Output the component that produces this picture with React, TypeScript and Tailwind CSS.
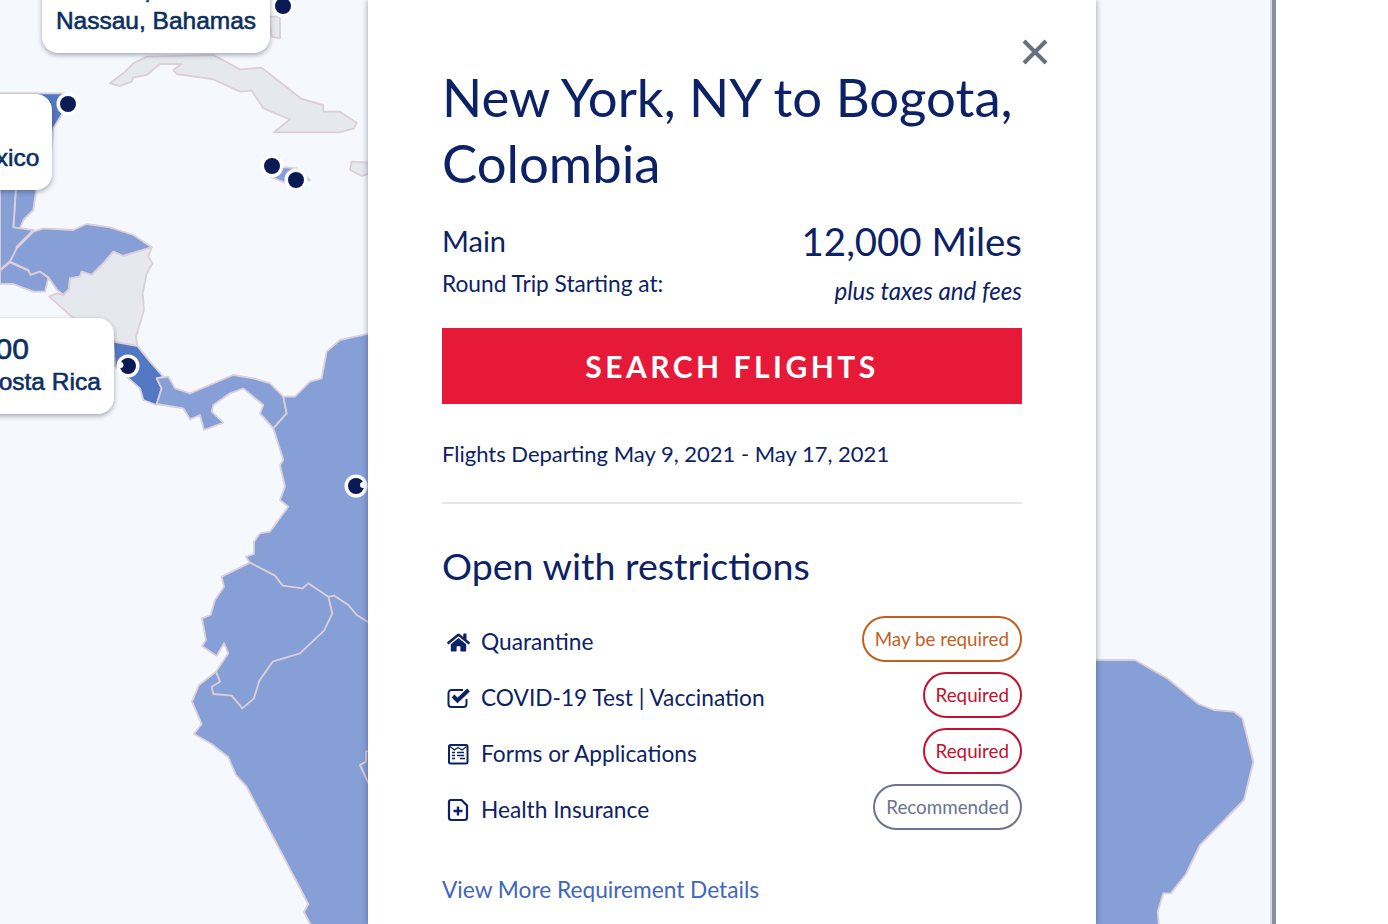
import { FaHome } from "react-icons/fa";

const NAVY = "#0d2266";

// all map shapes are traced in 3x reference coordinates
const blue = "#869fd7";
const dark = "#5278c4";
const grey = "#e5e8ed";
const line = "#dccfd8";

const leftShapes: { fill: string; points: string }[] = [
  { fill: grey, points: "330,250 375,215 400,190 440,170 640,165 720,208 785,203 905,297 970,315 970,335 1020,335 1070,368 1062,385 1020,397 822,397 870,358 790,325 755,272 720,275 640,238 530,222 520,210 545,192 480,192 440,225 400,232 395,245 360,258" },
  { fill: grey, points: "805,50 840,50 840,115 815,110" },
  { fill: grey, points: "1055,485 1110,488 1110,520 1085,528 1050,510" },
  { fill: blue, points: "830,500 890,505 930,540 890,550 855,548 810,530" },
  { fill: dark, points: "60,280 195,280 205,312 160,385 155,440 0,440 0,280" },
  { fill: blue, points: "48,560 110,560 100,630 70,660 60,685 40,685" },
  { fill: blue, points: "0,560 48,560 40,682 100,690 50,740 45,770 0,810" },
  { fill: blue, points: "100,695 130,685 220,690 260,672 330,682 400,705 455,742 370,768 340,755 315,785 275,825 245,815 240,830 210,835 207,868 190,885 170,868 145,832 120,815 90,825 85,810 30,785 50,745" },
  { fill: blue, points: "0,812 30,787 85,812 92,825 120,815 145,833 135,875 100,875 40,852 0,852" },
  { fill: grey, points: "455,742 445,770 458,790 440,820 428,880 432,930 408,1010 412,1040 345,1025 300,990 215,950 148,890 170,880 190,885 207,868 210,835 240,830 245,815 275,825 315,785 340,755 370,768" },
  { fill: dark, points: "340,1025 412,1038 450,1085 490,1130 470,1135 485,1165 470,1215 430,1200 420,1165 345,1100" },
  { fill: blue, points: "470,1135 505,1130 525,1165 570,1180 700,1125 760,1135 810,1150 850,1190 860,1240 820,1285 780,1240 790,1215 730,1165 690,1180 640,1215 635,1235 670,1268 612,1290 600,1245 570,1258 550,1225 470,1212 485,1165" },
  { fill: blue, points: "1110,1000 1065,1010 1020,1020 980,1055 965,1135 930,1145 885,1190 850,1190 860,1240 820,1285 850,1380 840,1395 855,1460 840,1500 865,1520 810,1595 780,1600 762,1625 762,1662 738,1670 750,1688 665,1730 672,1760 645,1800 632,1845 606,1855 618,1920 606,1938 650,1968 672,1930 685,1960 648,2015 597,2055 576,2105 605,2172 582,2202 635,2232 685,2272 708,2325 740,2360 925,2712 912,2736 935,2780 1110,2780" },
];

const borders = [
  "750,1688 825,1727 848,1757 908,1765 925,1750 985,1790",
  "985,1790 997,1840 972,1892 900,1960 818,1985 778,2042 762,2095 727,2125 695,2087 640,2082 635,2060 660,2045 648,2015",
  "985,1790 1003,1787 1045,1815 1070,1845 1110,1870",
  "1110,2252 1098,2255 1098,2285 1080,2295 1110,2360",
];

const pins = [
  [68, 104],
  [272, 166],
  [296, 180],
  [283, 6],
  [128, 366],
  [356, 486],
];

const MapCanvas = () => (
  <svg className="absolute inset-0" width="1272" height="924" viewBox="0 0 3816 2772" aria-hidden>
    <g strokeLinejoin="round" stroke={line} strokeWidth="5.5">
      {leftShapes.map((s, i) => (
        <polygon key={i} points={s.points} fill={s.fill} />
      ))}
      {borders.map((b, i) => (
        <polyline key={i} points={b} fill="none" />
      ))}
      <g transform="translate(3240 1860)">
        <polygon fill={blue} points="48,120 165,120 262,175 355,252 402,270 462,275 487,295 520,425 492,540 360,675 318,762 272,820 250,820 233,875 237,920 -100,920 -100,120" />
      </g>
    </g>
    {pins.map(([x, y]) => (
      <g key={`${x}-${y}`} transform="scale(3)">
        <circle cx={x} cy={y} r="11.5" fill="#fff" />
        <circle cx={x} cy={y} r="8" fill="#0a1a55" />
      </g>
    ))}
    <g transform="scale(3)" fill="#fff">
      <circle cx="120.5" cy="365" r="3" />
      <circle cx="363" cy="485" r="3" />
    </g>
  </svg>
);

const Fare = ({ className, miles, city }: { className: string; miles: string; city: string }) => (
  <div
    className={`absolute rounded-[16px] bg-white text-center text-[#0b2f63] shadow-[0_2px_5px_rgba(40,40,60,.4)] font-['Liberation_Sans',sans-serif] ${className}`}
  >
    <div className="mt-[13px] text-[30px] leading-[36px] [-webkit-text-stroke:0.6px_#0b2f63]">{miles}</div>
    <div className="text-[24.5px] leading-[30px] whitespace-nowrap [-webkit-text-stroke:0.6px_#0b2f63]">{city}</div>
  </div>
);

const HouseIcon = () => <FaHome className="h-[21px] w-[23px] text-[#0d2266]" />;

const CheckIcon = () => (
  <svg width="24" height="22" viewBox="0 0 24 22" fill="none">
    <path d="M19.5 12v5a3 3 0 0 1-3 3H4.500a3 3 0 0 1-3-3V6a3 3 0 0 1 3-3h11.500" stroke={NAVY} strokeWidth="2" />
    <path d="M6 9 10.500 13.500 21.500 3" stroke={NAVY} strokeWidth="4" />
  </svg>
);

const FormIcon = () => (
  <svg width="22" height="22" viewBox="0 0 22 22" fill="none">
    <rect x="2" y="2" width="18.5" height="18.5" rx="1.5" stroke={NAVY} strokeWidth="2" />
    <path d="M3 3.5 7.5 7 11 4.5 15 7l4.5-3.5" stroke={NAVY} strokeWidth="1.2" />
    <path d="M5 9.500h3M5 12.500h3M5 15.500h3M10 9.500h7M10 12.500h7M13 15.500h5" stroke={NAVY} strokeWidth="1.700" />
  </svg>
);

const PlusDocIcon = () => (
  <svg width="22" height="24" viewBox="0 0 22 24" fill="none">
    <path d="M4 2h10.500L20 7.500v12a2.500 2.500 0 0 1-2.500 2.500h-13A2.500 2.500 0 0 1 2 19.500V4a2 2 0 0 1 2-2Z" stroke={NAVY} strokeWidth="2.200" />
    <path d="M11 8.500v9M6.500 13h9" stroke={NAVY} strokeWidth="2.400" />
  </svg>
);

const requirements = [
  { icon: <HouseIcon />, label: "Quarantine", badge: "May be required", tone: "border-[#c2601f] text-[#c2601f]" },
  { icon: <CheckIcon />, label: "COVID-19 Test | Vaccination", badge: "Required", tone: "border-[#c4112f] text-[#c4112f]" },
  { icon: <FormIcon />, label: "Forms or Applications", badge: "Required", tone: "border-[#c4112f] text-[#c4112f]" },
  { icon: <PlusDocIcon />, label: "Health Insurance", badge: "Recommended", tone: "border-[#6b7390] text-[#6b7390]" },
];

const App = () => (
  <div className="flex h-[924px] w-[1388px] overflow-hidden bg-white font-['Lato',sans-serif] text-[#0d2266]">
    <div className="relative h-full w-[1272px] overflow-hidden border-r-2 border-[#d5d8de] bg-[#f5f9fd]">
      <MapCanvas />
      <Fare className="left-[42px] top-[-43px] w-[228px] h-[96px]" miles="12,000" city="Nassau, Bahamas" />
      <Fare className="left-[-149px] top-[94px] w-[201px] h-[96px]" miles="12,000" city="Cancun, Mexico" />
      <Fare className="left-[-148px] top-[318px] w-[262px] h-[96px]" miles="12,000" city="San Jose, Costa Rica" />

      <aside className="relative ml-[368px] flex h-full w-[728px] flex-col bg-white px-[74px] shadow-[0_0_6px_rgba(30,40,70,.45)]">
        <button className="absolute right-[47px] top-[38px] text-[#667180]" aria-label="Close">
          <svg width="28" height="28" viewBox="0 0 28 28" fill="none">
            <path d="M3 3l22 22M25 3 3 25" stroke="currentColor" strokeWidth="4" />
          </svg>
        </button>

        <h1 className="mt-[64px] text-[52.7px] leading-[66px]">New York, NY to Bogota, Colombia</h1>

        <div className="mt-[26px] flex items-start justify-between">
          <div>
            <div className="-mt-[1px] text-[29px] leading-[40px]">Main</div>
            <div className="mt-[7px] text-[22.7px] leading-[32px]">Round Trip Starting at:</div>
          </div>
          <div className="-mt-[1px] text-right">
            <div className="text-[38.4px] leading-[40px]">12,000 Miles</div>
            <div className="mt-[14px] text-[24.1px] leading-[32px] italic">plus taxes and fees</div>
          </div>
        </div>

        <button className="mt-[21px] h-[76px] w-full shrink-0 bg-[#e61938] text-[30px] font-bold tracking-[3.5px] text-white">
          SEARCH FLIGHTS
        </button>

        <p className="mt-[34px] text-[22px] leading-[32px]">Flights Departing May 9, 2021 - May 17, 2021</p>

        <hr className="mt-[32px] border-t-2 border-[#e3e5e7]" />

        <h2 className="mt-[37px] text-[37.6px] leading-[50px]">Open with restrictions</h2>

        <ul className="mt-[25px] flex flex-col gap-[10px]">
          {requirements.map((r) => (
            <li key={r.label} className="flex h-[46px] items-start justify-between">
              <div className="flex items-center pt-[10px]">
                <span className="flex w-[39px] pl-[5px]">{r.icon}</span>
                <span className="text-[22.7px] leading-[32px]">{r.label}</span>
              </div>
              <span className={`flex h-[46px] items-center rounded-full border-2 px-[11px] text-[18.8px] ${r.tone}`}>{r.badge}</span>
            </li>
          ))}
        </ul>

        <a className="mt-[44px] text-[22.7px] leading-[32px] text-[#3f66bd]">View More Requirement Details</a>
      </aside>
    </div>
    <div className="h-full w-[4px] bg-[#8590a6]" />
  </div>
);

export default App;
